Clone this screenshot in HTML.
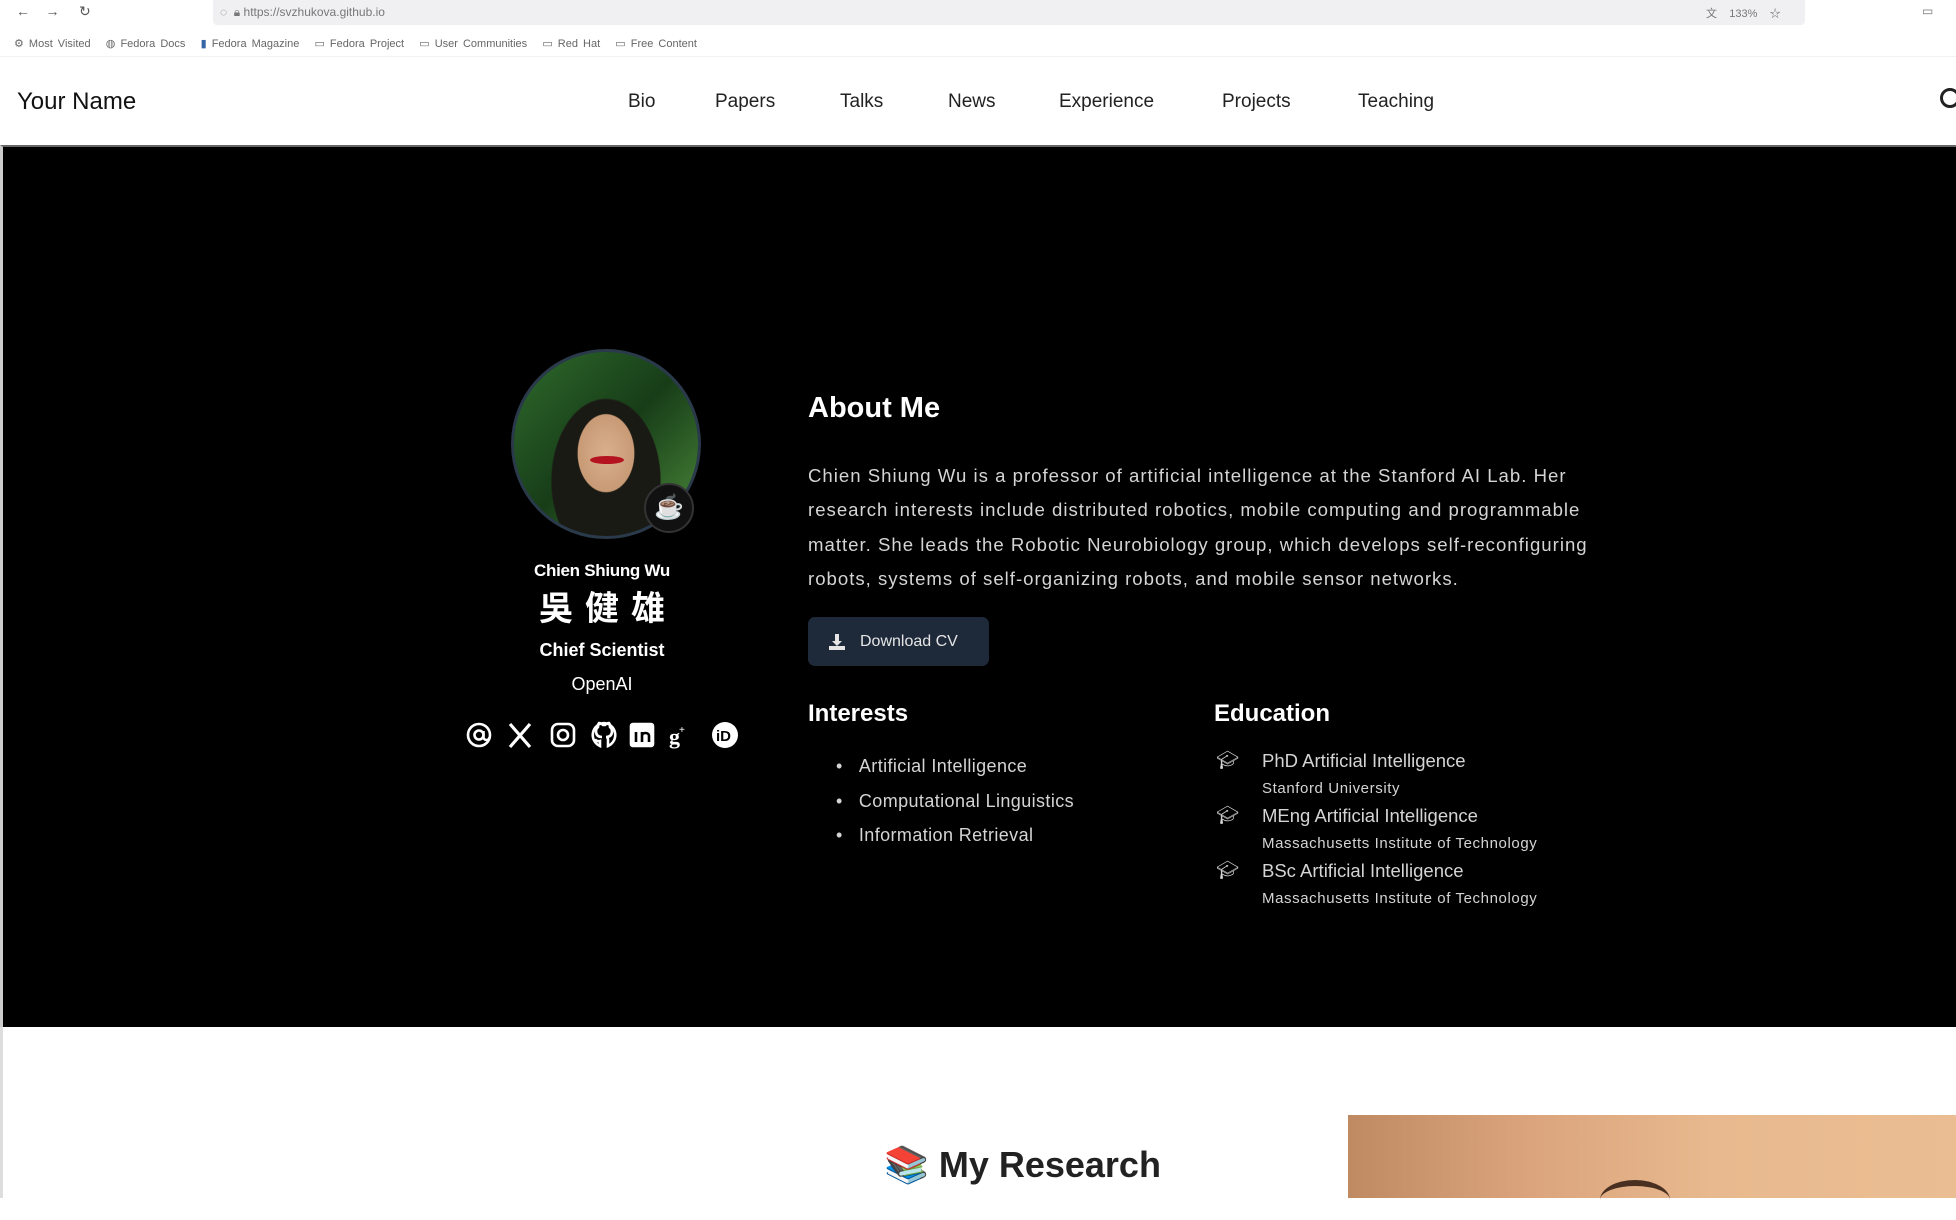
<!DOCTYPE html>
<html><head><meta charset="utf-8"><style>
*{margin:0;padding:0;box-sizing:border-box}
body{width:1956px;height:1198px;overflow:hidden;background:#fff;font-family:"Liberation Sans","Noto Sans CJK SC",sans-serif;position:relative}
.a{position:absolute;white-space:nowrap}
.nav{font-size:19px;color:#222;top:91px}
.w{color:#fff}
.g{color:#d4d4d4}
</style></head><body>
<div class="a" style="left:0;top:0;width:1956px;height:25px;background:#fff"></div>
<div class="a" style="left:213px;top:0;width:1592px;height:25px;background:#f0f0f2;border-radius:0 0 4px 4px"></div>
<div class="a" style="left:16px;top:3px;font-size:14px;color:#555">←&nbsp;&nbsp;&nbsp;&nbsp;→&nbsp;&nbsp;&nbsp;&nbsp;&nbsp;↻</div>
<div class="a" style="left:220px;top:5px;font-size:12px;color:#777">◌&nbsp;&nbsp;🔒︎ https://svzhukova.github.io</div>
<div class="a" style="left:1706px;top:5px;font-size:11px;color:#777">文&nbsp;&nbsp;&nbsp;&nbsp;133%&nbsp;&nbsp;&nbsp;&nbsp;☆</div>
<div class="a" style="left:1922px;top:4px;font-size:12px;color:#777">▭</div>
<div class="a" style="left:14px;top:37px;font-size:11px;color:#666;word-spacing:2px">⚙ Most Visited &nbsp; ◍ Fedora Docs &nbsp; <span style="color:#3465a4">▮</span> Fedora Magazine &nbsp; ▭ Fedora Project &nbsp; ▭ User Communities &nbsp; ▭ Red Hat &nbsp; ▭ Free Content</div>
<div class="a" style="left:0;top:56px;width:1956px;height:1px;background:#f2f2f2"></div>
<div class="a" style="left:17px;top:88px;font-size:24px;color:#111">Your Name</div>
<div class="a nav" style="left:628px">Bio</div>
<div class="a nav" style="left:715px">Papers</div>
<div class="a nav" style="left:840px">Talks</div>
<div class="a nav" style="left:948px">News</div>
<div class="a nav" style="left:1059px">Experience</div>
<div class="a nav" style="left:1222px">Projects</div>
<div class="a nav" style="left:1358px">Teaching</div>
<div class="a" style="left:1940px;top:88px;width:20px;height:20px;border:3px solid #222;border-radius:50%"></div>
<div class="a" style="left:0;top:145px;width:1956px;height:882px;background:#000;border-left:3px solid #ccc;border-top:2px solid #666"></div>
<div class="a" style="left:511px;top:349px;width:190px;height:190px;border-radius:50%;border:3px solid #2a3a4a;overflow:hidden;background:radial-gradient(ellipse 40px 55px at 50% 55%,#d9b08c 0,#c89a76 70%,transparent 72%),radial-gradient(ellipse 60px 90px at 50% 70%,#1a1a14 0,#1a1a14 90%,transparent 92%),linear-gradient(135deg,#2f6a2c,#173d18 50%,#4c8a3a)"></div>
<div class="a" style="left:590px;top:456px;width:34px;height:8px;border-radius:50%;background:#b3121e"></div>
<div class="a" style="left:644px;top:483px;width:50px;height:50px;border-radius:50%;background:#111;border:2px solid #333;text-align:center;font-size:24px;line-height:46px">☕</div>
<div class="a w" style="left:450px;width:304px;text-align:center;top:561px;font-size:17px;font-weight:bold;letter-spacing:-0.3px">Chien Shiung Wu</div>
<div class="a w" style="left:450px;width:304px;text-align:center;top:581px;font-size:34px;font-weight:bold;letter-spacing:12px;padding-left:12px">吳健雄</div>
<div class="a w" style="left:450px;width:304px;text-align:center;top:640px;font-size:18px;font-weight:bold">Chief Scientist</div>
<div class="a w" style="left:450px;width:304px;text-align:center;top:674px;font-size:18px">OpenAI</div>
<svg class="a" style="left:465px;top:719px" width="280" height="34" viewBox="0 0 280 34" fill="none" stroke="#fff" stroke-width="2.6">
<circle cx="14" cy="16" r="11"/><circle cx="14" cy="16" r="4.5"/><path d="M18.5 12v6a3 3 0 0 0 6 0"/>
<path d="M45 5l20 23M65 5L45 28" stroke-width="3.2"/>
<rect x="87" y="5" width="22" height="22" rx="6"/><circle cx="98" cy="16" r="5"/>
<path d="M139 4a12 12 0 0 0-4 23v-5c-4 1-5-2-5-2M139 4a12 12 0 0 1 4 23v-6c0-2-1-3-2-3 4 0 6-2 6-6 0-2-1-3-2-4 0-1 0-3-1-4-1 0-3 1-4 2h-2c-1-1-3-2-4-2-1 1-1 3-1 4-1 1-2 2-2 4 0 4 2 6 6 6"/>
<rect x="166" y="5" width="22" height="22" rx="2" fill="#fff"/>
<path d="M171 13v10M177 13v10M177 17c0-4 7-4 7 0v6" stroke="#000" stroke-width="2.6"/>
<text x="204" y="25" fill="#fff" stroke="none" font-family="Liberation Serif" font-weight="bold" font-size="22">g</text>
<text x="214" y="14" fill="#fff" stroke="none" font-size="10">+</text>
<circle cx="260" cy="16" r="13" fill="#fff" stroke="none"/>
<text x="251" y="22" fill="#000" stroke="none" font-size="15" font-weight="bold">iD</text>
</svg>
<div class="a w" style="left:808px;top:392px;font-size:29px;font-weight:bold">About Me</div>
<div class="a g" style="left:808px;top:459px;font-size:18.6px;line-height:34.3px;letter-spacing:1px">Chien Shiung Wu is a professor of artificial intelligence at the Stanford AI Lab. Her<br>research interests include distributed robotics, mobile computing and programmable<br>matter. She leads the Robotic Neurobiology group, which develops self-reconfiguring<br>robots, systems of self-organizing robots, and mobile sensor networks.</div>
<div class="a" style="left:808px;top:617px;width:181px;height:49px;background:#1e2a3a;border-radius:7px;color:#e5e5e5;font-size:16px;line-height:49px;padding-left:52px">Download CV</div>
<svg class="a" style="left:828px;top:633px" width="18" height="18" viewBox="0 0 18 18" fill="#e5e5e5"><path d="M7 1h4v7h3l-5 5-5-5h3z"/><rect x="1" y="13" width="16" height="4"/></svg>
<div class="a w" style="left:808px;top:700px;font-size:24px;font-weight:bold">Interests</div>
<div class="a g" style="left:836px;top:749px;font-size:18px;line-height:34.5px;letter-spacing:0.4px">•&nbsp;&nbsp;&nbsp;Artificial Intelligence<br>•&nbsp;&nbsp;&nbsp;Computational Linguistics<br>•&nbsp;&nbsp;&nbsp;Information Retrieval</div>
<div class="a w" style="left:1214px;top:700px;font-size:24px;font-weight:bold">Education</div>
<div class="a g" style="left:1216px;top:750px;font-size:18px">🎓︎</div>
<div class="a g" style="left:1216px;top:805px;font-size:18px">🎓︎</div>
<div class="a g" style="left:1216px;top:860px;font-size:18px">🎓︎</div>
<div class="a g" style="left:1262px;top:750px;font-size:18.5px">PhD Artificial Intelligence</div>
<div class="a g" style="left:1262px;top:780px;font-size:15px;letter-spacing:0.6px">Stanford University</div>
<div class="a g" style="left:1262px;top:805px;font-size:18.5px">MEng Artificial Intelligence</div>
<div class="a g" style="left:1262px;top:835px;font-size:15px;letter-spacing:0.6px">Massachusetts Institute of Technology</div>
<div class="a g" style="left:1262px;top:860px;font-size:18.5px">BSc Artificial Intelligence</div>
<div class="a g" style="left:1262px;top:890px;font-size:15px;letter-spacing:0.6px">Massachusetts Institute of Technology</div>
<div class="a" style="left:0;top:1027px;width:3px;height:171px;background:#ddd"></div>
<div class="a" style="left:884px;top:1144px;font-size:36px;font-weight:bold;color:#222">📚 My Research</div>
<div class="a" style="left:1348px;top:1115px;width:608px;height:83px;background:linear-gradient(90deg,#bf8a62,#dba47c 30%,#e8b98e 60%,#ebbd92)"></div>
<div class="a" style="left:1600px;top:1180px;width:70px;height:40px;border-radius:50%;border-top:6px solid #4a3020"></div>
</body></html>
